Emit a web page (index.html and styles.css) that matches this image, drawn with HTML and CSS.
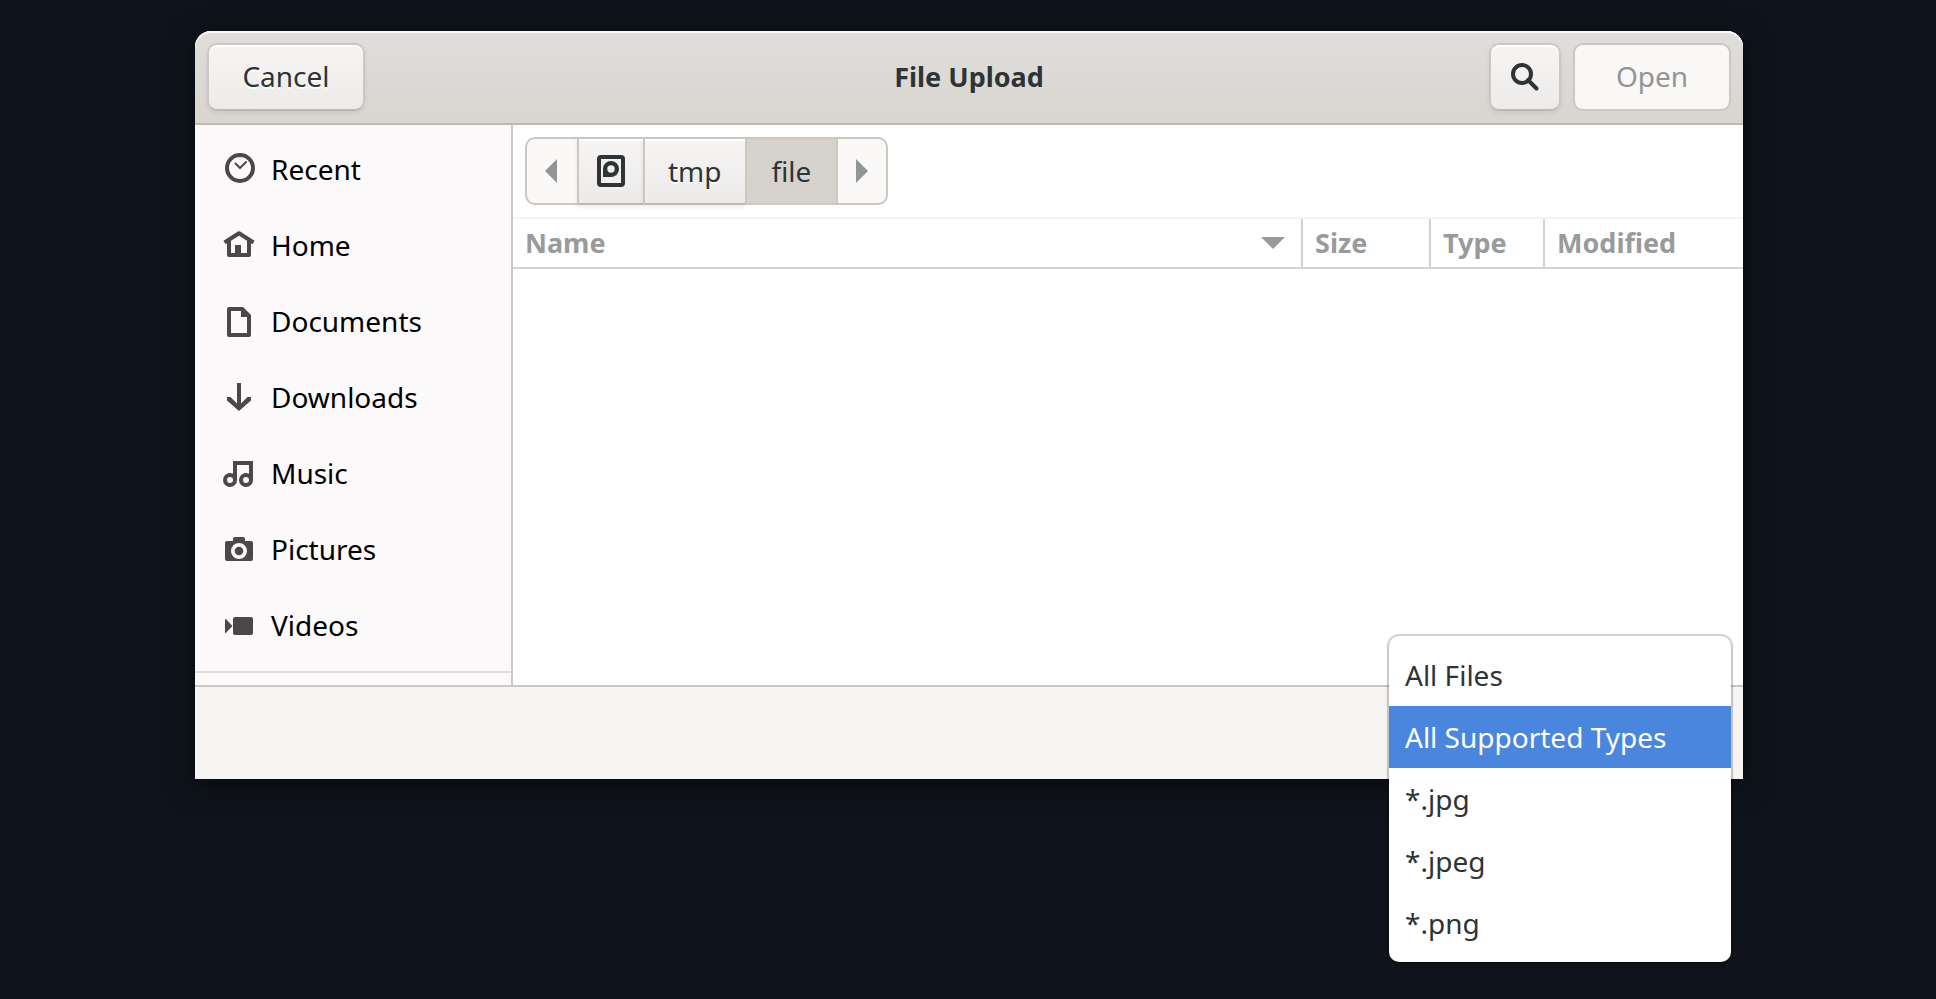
FILE: index.html
```html
<!DOCTYPE html>
<html lang="en">
<head>
<meta charset="utf-8">
<meta name="viewport" content="width=device-width, initial-scale=1">
<title>File Upload</title>
<link rel="stylesheet" href="styles.css">
</head>
<body>
<main class="window">
  <header class="headerbar">
    <div class="header-start"><button class="button" type="button">Cancel</button></div>
    <h1 class="title">File Upload</h1>
    <div class="header-end">
      <button class="button button-icon" type="button" aria-label="Search">
        <svg class="icon" viewBox="0 0 32 32" aria-hidden="true"><g fill="none" stroke="currentColor" stroke-width="4"><circle cx="13" cy="13" r="9"/><path d="M19 19l8.500 8.500" stroke-linecap="round"/></g></svg>
      </button>
      <button class="button" type="button" disabled>Open</button>
    </div>
  </header>

  <div class="content">
    <nav class="sidebar" aria-label="Places">
      <ul class="places">
        <li><a class="place" href="#recent"><svg class="icon" viewBox="0 0 32 32" aria-hidden="true"><g fill="none" stroke="currentColor"><circle cx="17" cy="15" r="13" stroke-width="4"/><path d="M12.500 10.500L17 15l6-6" stroke-width="2" stroke-linecap="round"/></g></svg>Recent</a></li>
        <li><a class="place" href="#home"><svg class="icon" viewBox="0 0 32 32" aria-hidden="true"><g fill="none" stroke="currentColor" stroke-width="4" stroke-linejoin="round"><path d="M6 12v14h20V12"/><path d="M1.500 13.500L16 4.300l14.500 9.200" stroke-linecap="butt"/></g><path d="M12 16h6v10h-6z" fill="currentColor"/></svg>Home</a></li>
        <li><a class="place" href="#documents"><svg class="icon" viewBox="0 0 32 32" aria-hidden="true"><path fill="currentColor" fill-rule="evenodd" d="M6 2h14l8 8v20a2 2 0 0 1-2 2H6a2 2 0 0 1-2-2V4a2 2 0 0 1 2-2zM8 6v22h16V12h-6V6z"/></svg>Documents</a></li>
        <li><a class="place" href="#downloads"><svg class="icon" viewBox="0 0 32 32" aria-hidden="true"><path fill="currentColor" d="M14 2h4v20.500l6.500-6.500H28v3.500L16 30 4 19.500V16h3.500l6.500 6.500z"/></svg>Downloads</a></li>
        <li><a class="place" href="#music"><svg class="icon" viewBox="0 0 32 32" aria-hidden="true"><g fill="none" stroke="currentColor" stroke-width="4"><circle cx="7" cy="23" r="5"/><circle cx="23" cy="23" r="5"/><path d="M12 23V6h16v17"/></g></svg>Music</a></li>
        <li><a class="place" href="#pictures"><svg class="icon" viewBox="0 0 32 32" aria-hidden="true"><path fill="currentColor" fill-rule="evenodd" d="M12 4h8a2 2 0 0 1 2 2v2h6a2 2 0 0 1 2 2v16a2 2 0 0 1-2 2H4a2 2 0 0 1-2-2V10a2 2 0 0 1 2-2h6V6a2 2 0 0 1 2-2zM16 10a8 8 0 1 0 0 16a8 8 0 1 0 0-16z"/><circle cx="16" cy="18" r="4.300" fill="currentColor"/></svg>Pictures</a></li>
        <li><a class="place" href="#videos"><svg class="icon" viewBox="0 0 32 32" aria-hidden="true"><g fill="currentColor"><rect x="10" y="8" width="20" height="18" rx="2"/><path d="M2 10.500c0-.6.700-.7 1-.3L9.500 17 3 23.800c-.3.400-1 .3-1-.3z"/></g></svg>Videos</a></li>
      </ul>
      <hr class="separator">
    </nav>

    <section class="browser" aria-label="Files">
      <nav class="pathbar" aria-label="Path">
        <button class="crumb crumb-end" type="button" disabled aria-label="Back"><svg class="arrow" viewBox="0 0 12 24" aria-hidden="true"><path fill="currentColor" d="M12 0v24L0 12z"/></svg></button>
        <button class="crumb crumb-disk" type="button" aria-label="File system"><svg class="icon" viewBox="0 0 32 32" aria-hidden="true"><rect x="4" y="2" width="24" height="28" rx="2" fill="none" stroke="currentColor" stroke-width="4"/><path fill="currentColor" fill-rule="evenodd" d="M8 22v-8a8 8 0 1 1 8 8zM16 10.300a3.700 3.700 0 1 0 0 7.400a3.700 3.700 0 1 0 0-7.400z"/></svg></button>
        <button class="crumb" type="button">tmp</button>
        <button class="crumb crumb-current" type="button" aria-current="page">file</button>
        <button class="crumb crumb-end" type="button" disabled aria-label="Forward"><svg class="arrow" viewBox="0 0 12 24" aria-hidden="true"><path fill="currentColor" d="M0 0v24l12-12z"/></svg></button>
      </nav>
      <table class="files">
        <thead>
          <tr>
            <th class="col-name" scope="col" aria-sort="ascending"><span class="sort">Name<svg class="sort-arrow" viewBox="0 0 24 12" aria-hidden="true"><path fill="currentColor" d="M0 0h24L12 12z"/></svg></span></th>
            <th class="col-size" scope="col">Size</th>
            <th class="col-type" scope="col">Type</th>
            <th class="col-modified" scope="col">Modified</th>
          </tr>
        </thead>
        <tbody></tbody>
      </table>
    </section>
  </div>

  <footer class="actionbar">
    <select class="filter" size="5" aria-label="File type">
      <option>All Files</option>
      <option selected>All Supported Types</option>
      <option>*.jpg</option>
      <option>*.jpeg</option>
      <option>*.png</option>
    </select>
  </footer>
</main>
</body>
</html>
```
FILE: styles.css
```css
* {
  box-sizing: border-box;
}

body {
  margin: 0;
  padding: 31px 193px 220px 195px;
  background: #0f141c;
  color: #2e3436;
  font-family: "Noto Sans", "Open Sans", sans-serif;
  font-size: 28px;
  line-height: 40px;
}

button,
select {
  font: inherit;
  color: inherit;
}

.window {
  background: #fff;
  border-radius: 16px 16px 0 0;
  box-shadow: 0 6px 28px 2px rgba(0, 0, 0, 0.5);
}

.icon {
  display: block;
  flex: none;
  width: 32px;
  height: 32px;
}

/* Header bar */

.headerbar {
  display: grid;
  grid-template-columns: 1fr auto 1fr;
  align-items: center;
  padding: 12px;
  border-bottom: 2px solid #bfb8b1;
  border-radius: 16px 16px 0 0;
  background: linear-gradient(#dfdedb, #d9d5d1);
  box-shadow: inset 0 2px #fbfbfa;
}

.header-start,
.header-end {
  display: flex;
  gap: 12px;
}

.header-end {
  justify-content: flex-end;
}

.title {
  margin: 0;
  font-size: 27px;
  font-weight: 700;
}

.button {
  display: flex;
  align-items: center;
  justify-content: center;
  min-width: 158px;
  height: 68px;
  padding: 0 16px 2px;
  border: 2px solid #cdc7c2;
  border-bottom-color: #bfb8b1;
  border-radius: 10px;
  background: linear-gradient(#f6f5f4, #edebe9);
  box-shadow: inset 0 2px #fff, 0 2px 4px rgba(0, 0, 0, 0.08);
  text-shadow: 0 2px rgba(255, 255, 255, 0.8);
}

.button-icon {
  min-width: 72px;
  padding-bottom: 0;
}

.button:disabled {
  border-color: #cdc7c2;
  background: #faf9f8;
  color: #929595;
  box-shadow: none;
  text-shadow: none;
}

/* Places */

.content {
  display: flex;
  border-bottom: 2px solid #cdc7c2;
}

.sidebar {
  flex: none;
  width: 318px;
  padding: 6px 0 12px;
  border-right: 2px solid #cdc7c7;
  background: #fbf9fa;
}

.places {
  margin: 0;
  padding: 0;
  list-style: none;
}

.place {
  display: flex;
  align-items: center;
  gap: 16px;
  height: 76px;
  padding: 0 28px;
  color: #000;
  text-decoration: none;
}

.place .icon {
  color: #4a4849;
}

.separator {
  height: 2px;
  margin: 8px 0 0;
  border: 0;
  background: #e0dddf;
}

/* Path bar */

.browser {
  flex: 1;
  min-width: 0;
}

.pathbar {
  display: flex;
  padding: 12px;
}

.crumb {
  display: flex;
  align-items: center;
  justify-content: center;
  height: 68px;
  padding: 0 23px;
  border: 2px solid #cdc7c2;
  border-right: 0;
  border-bottom-color: #bfb8b1;
  background: linear-gradient(#f6f5f4, #edebe9);
  box-shadow: inset 0 2px #fff, 0 2px 4px rgba(0, 0, 0, 0.08);
  text-shadow: 0 2px rgba(255, 255, 255, 0.8);
}

.crumb-disk {
  padding: 0 16px;
}

.crumb-current {
  padding: 0 25px;
  border-color: #cdc7c2;
  background: #d6d2cd;
  box-shadow: none;
  text-shadow: none;
}

.crumb-end {
  padding: 0 18px;
  border-color: #cdc7c2;
  background: #faf9f8;
  color: #929595;
  box-shadow: none;
}

.crumb:first-child {
  padding-right: 20px;
  border-radius: 10px 0 0 10px;
}

.crumb:last-child {
  border-right: 2px solid #cdc7c2;
  border-radius: 0 10px 10px 0;
}

.arrow {
  width: 12px;
  height: 24px;
}

/* File list */

.files {
  width: 100%;
  border-collapse: separate;
  border-spacing: 0;
  table-layout: fixed;
}

.files th {
  height: 52px;
  padding: 0 12px;
  border-top: 2px solid #f6f3f3;
  border-bottom: 2px solid #d3d3d3;
  color: #989a9b;
  font-size: 27px;
  font-weight: 700;
  line-height: 40px;
  text-align: left;
  background: linear-gradient(#d3d3d3, #d3d3d3) right / 2px 100% no-repeat;
}

.files .col-modified {
  width: 198px;
  background: none;
}

.files .col-size {
  width: 128px;
}

.files .col-type {
  width: 114px;
}

.sort {
  display: flex;
  align-items: center;
  justify-content: space-between;
  padding-right: 6px;
}

.sort-arrow {
  width: 24px;
  height: 12px;
}

/* Footer with the open file type list */

.actionbar {
  position: relative;
  min-height: 92px;
  background: #f6f5f4;
}

.filter {
  position: absolute;
  top: -51px;
  right: 12px;
  width: 342px;
  height: 326px;
  padding: 8px 0;
  overflow: hidden;
  border: 0;
  border-radius: 10px;
  outline: 0;
  background: #fff;
  box-shadow: 0 0 0 2px rgba(0, 0, 0, 0.16), 0 2px 4px rgba(0, 0, 0, 0.15);
}

.filter option {
  height: 62px;
  padding: 12px 16px 10px;
  line-height: 40px;
}

.filter option:checked {
  background: #4a86dd linear-gradient(#4a86dd, #4a86dd);
  -webkit-text-fill-color: #fff;
}
```
